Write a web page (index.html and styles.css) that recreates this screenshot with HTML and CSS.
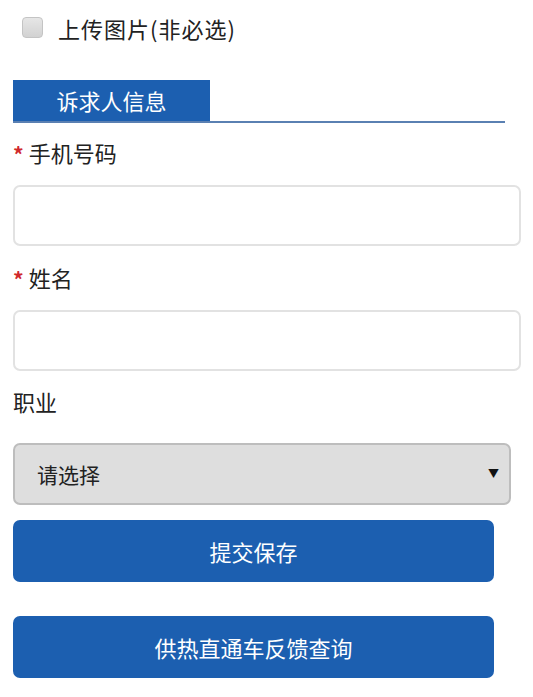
FILE: index.html
```html
<!DOCTYPE html>
<html lang="zh-CN">
<head>
  <meta charset="UTF-8">
  <title>诉求人信息</title>
  <meta name="viewport" content="width=device-width, initial-scale=1.0">
  <link rel="stylesheet" href="styles.css">
</head>

<body>
  <div class="form">
    <label class="upload">
      <input type="checkbox" class="check">
      <span>上传图片(非必选)</span>
    </label>

    <div class="tab-bar">
      <div class="tab">诉求人信息</div>
    </div>

    <div class="field-label first"><span class="req">*</span>手机号码</div>
    <input type="text" class="text-input">

    <div class="field-label"><span class="req">*</span>姓名</div>
    <input type="text" class="text-input">

    <div class="field-label job">职业</div>
    <div class="select-wrap">
      <select class="select">
        <option>请选择</option>
      </select>
      <span class="arrow">▼</span>
    </div>

    <button class="btn submit">提交保存</button>
    <button class="btn query">供热直通车反馈查询</button>
  </div>
</body>
</html>
```

FILE: styles.css
```css
body {
  margin: 0;
  padding: 0;
  background: #ffffff;
  font-family: "Noto Sans CJK SC", "Noto Sans", sans-serif;
  color: #222222;
}

.form {
  display: flex;
  flex-direction: column;
  align-items: flex-start;
  padding: 17px 0 0 13px;
}

/* 上传图片 */
.upload {
  display: flex;
  align-items: center;
  gap: 15px;
  margin-left: 9px;
  height: 21px;
  font-size: 22px;
  letter-spacing: 1px;
}

.check {
  appearance: none;
  -webkit-appearance: none;
  width: 21px;
  height: 21px;
  margin: 0;
  border: 1px solid #c4c4c4;
  border-radius: 4px;
  background: linear-gradient(#e6e6e6, #d2d2d2);
  box-sizing: border-box;
}

/* 标签页 */
.tab-bar {
  display: flex;
  width: 492px;
  margin-top: 42px;
  border-bottom: 2px solid #5a80b2;
}

.tab {
  width: 197px;
  height: 41px;
  background: #1c5fb0;
  color: #ffffff;
  font-size: 22px;
  line-height: 41px;
  text-align: center;
}

/* 字段 */
.field-label {
  display: flex;
  align-items: center;
  height: 30px;
  margin-top: 16px;
  font-size: 22px;
}

.field-label.first {
  margin-top: 14px;
}

.field-label.job {
  margin-top: 15px;
}

.req {
  color: #d0282c;
  font-size: 21px;
  font-weight: bold;
  margin-right: 5px;
  padding-top: 3px;
}

.text-input {
  width: 508px;
  height: 61px;
  margin-top: 18px;
  box-sizing: border-box;
  border: 2px solid #e2e2e2;
  border-radius: 7px;
  background: #ffffff;
  outline: none;
}

.select-wrap {
  position: relative;
  margin-top: 27px;
}

.select {
  appearance: none;
  -webkit-appearance: none;
  width: 498px;
  height: 62px;
  box-sizing: border-box;
  padding: 0 0 0 22px;
  border: 2px solid #bdbdbd;
  border-radius: 7px;
  background: #dedede;
  font-family: inherit;
  font-size: 21px;
  color: #222222;
}

.arrow {
  position: absolute;
  right: 12px;
  top: 22px;
  font-size: 11px;
  color: #111111;
}

/* 按钮 */
.btn {
  width: 481px;
  height: 62px;
  border: none;
  border-radius: 7px;
  background: #1c5fb0;
  color: #ffffff;
  font-family: inherit;
  font-size: 22px;
}

.submit {
  margin-top: 15px;
}

.query {
  margin-top: 34px;
}
```
